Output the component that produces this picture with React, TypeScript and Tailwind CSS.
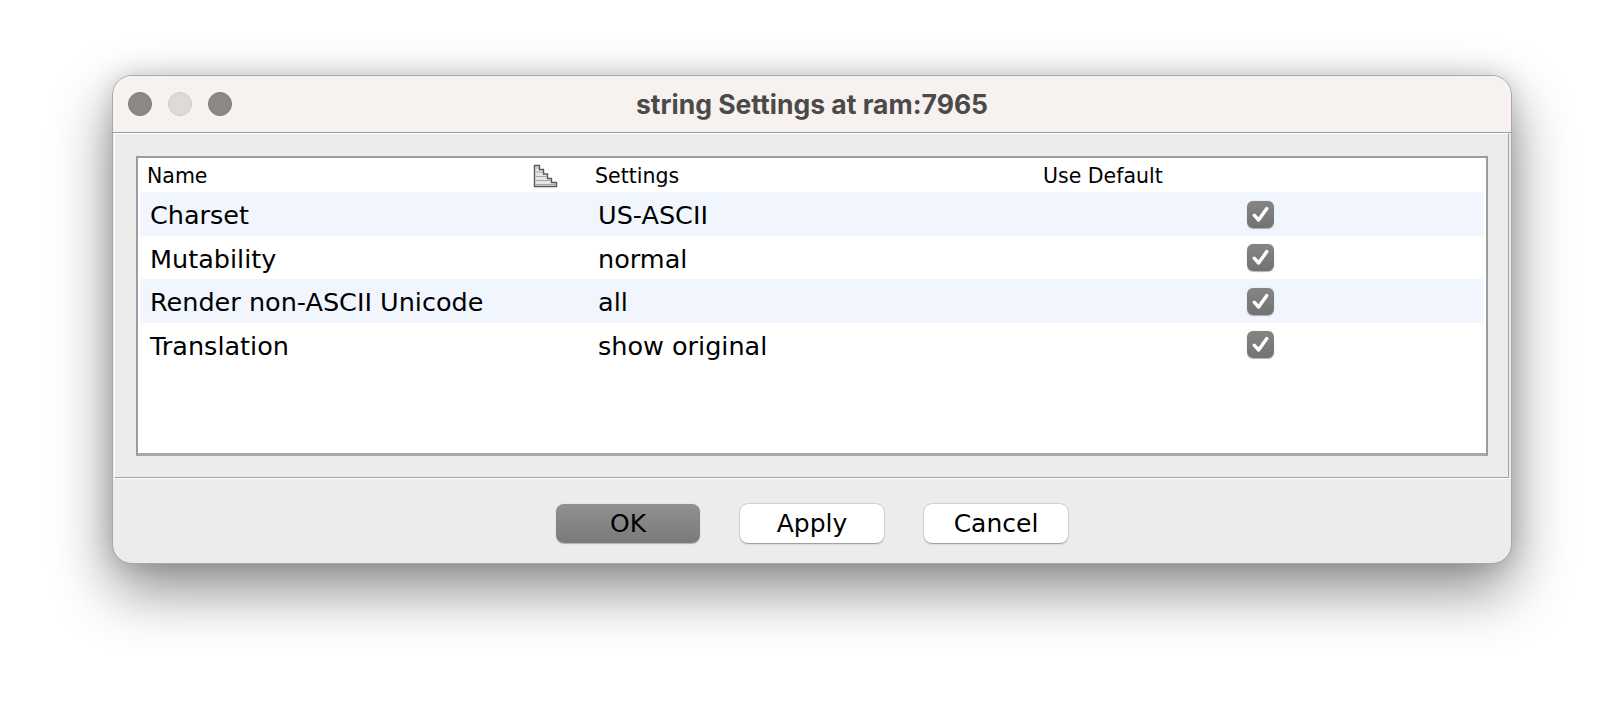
import React from "react";

const rows = [
  { name: "Charset", value: "US-ASCII" },
  { name: "Mutability", value: "normal" },
  { name: "Render non-ASCII Unicode", value: "all" },
  { name: "Translation", value: "show original" },
];

function SortIcon() {
  return (
    <svg width="25" height="24" viewBox="0 0 25 24" className="block">
      <path d="M1.5 1.5 H6.5 V5.5 H10.5 V10 H14.5 V14.5 H18.5 V18.5 H23.5 V22.5 H1.5 Z" fill="#e6e6e6" stroke="#5a5a5a" strokeWidth="1.4" />
      <line x1="2.5" y1="4" x2="6" y2="4" stroke="#a8a8a8" strokeWidth="1.2" />
      <line x1="2.5" y1="8" x2="10" y2="8" stroke="#a8a8a8" strokeWidth="1.2" />
      <line x1="2.5" y1="12.5" x2="14" y2="12.5" stroke="#a8a8a8" strokeWidth="1.2" />
      <line x1="2.5" y1="16.5" x2="18" y2="16.5" stroke="#a8a8a8" strokeWidth="1.2" />
      <line x1="2.5" y1="20.5" x2="23" y2="20.5" stroke="#a8a8a8" strokeWidth="1.2" />
    </svg>
  );
}

function Check() {
  return (
    <div className="w-[27px] h-[27px] rounded-[6px] bg-gradient-to-b from-[#858585] to-[#727272] flex items-center justify-center shadow-[0_0.5px_1px_rgba(0,0,0,0.3)]">
      <svg width="27" height="27" viewBox="0 0 27 27">
        <path d="M7.2 14.2 L11.6 19 L19.8 7.6" fill="none" stroke="#ffffff" strokeWidth="3.4" strokeLinecap="round" strokeLinejoin="round" />
      </svg>
    </div>
  );
}

export default function App() {
  return (
    <div className="w-[1624px] h-[712px] bg-white pl-[112px] pt-[75px] font-['DejaVu_Sans',sans-serif] text-black overflow-hidden">
      <div className="w-[1400px] h-[489px] rounded-[20px] border border-[#a8a8a8] bg-[#ececec] overflow-hidden flex flex-col shadow-[0_26px_60px_rgba(0,0,0,0.45),0_0_24px_rgba(0,0,0,0.15)]">
        {/* title bar */}
        <div className="h-[57px] shrink-0 bg-[#f7f2ef] border-b border-[#9a9a9a] grid grid-cols-[1fr_auto_1fr] items-center">
          <div className="flex items-center gap-4 pl-[15px]">
            <div className="w-6 h-6 rounded-full bg-[#8c8886] border border-[#807c7a]" />
            <div className="w-6 h-6 rounded-full bg-[#dedad8] border border-[#cfcbc9]" />
            <div className="w-6 h-6 rounded-full bg-[#8c8886] border border-[#807c7a]" />
          </div>
          <div className="font-['Inter',sans-serif] font-bold text-[26.5px] leading-none text-[#4a4a4a] pt-[1px]">
            string Settings at ram:7965
          </div>
          <div />
        </div>

        {/* content panel */}
        <div className="h-[345px] shrink-0 ml-[1px] mr-[2px] border border-white border-b-[#a3a3a3] border-r-[#a3a3a3] pt-[22px] pl-[21px] pr-[20px] pb-[21px]">
          <div className="h-full bg-white border-2 border-[#9d9d9d] border-b-[3px] border-b-[#a9a9a9] p-[2px] flex flex-col">
            <div className="h-[32px] grid grid-cols-3 text-[20.5px] leading-none">
              <div className="flex items-center pl-[7px] pr-[30px] justify-between">
                <span>Name</span>
                <SortIcon />
              </div>
              <div className="flex items-center pl-[7px]">Settings</div>
              <div className="flex items-center pl-[7px]">Use Default</div>
            </div>
            {rows.map((r, i) => (
              <div
                key={r.name}
                className={
                  "grid grid-cols-3 text-[25.5px] leading-none " +
                  (i % 2 === 0 ? "h-[44px] bg-[#f1f5fd]" : "h-[43px] bg-white")
                }
              >
                <div className="flex items-center pl-[10px] pt-[4px]">{r.name}</div>
                <div className="flex items-center pl-[10px] pt-[4px]">{r.value}</div>
                <div className="flex items-center justify-center">
                  <Check />
                </div>
              </div>
            ))}
          </div>
        </div>

        {/* buttons */}
        <div className="flex-1 border-t border-white flex justify-center gap-10 pt-[25px] text-[25px] leading-none">
          <button className="w-[144px] h-[39px] rounded-[8px] bg-gradient-to-b from-[#909090] to-[#7a7a7a] text-black shadow-[0_0.5px_1px_rgba(0,0,0,0.25)]">
            OK
          </button>
          <button className="w-[144px] h-[39px] rounded-[8px] bg-white text-black shadow-[0_0.5px_1.5px_rgba(0,0,0,0.35),0_0_0_0.5px_rgba(0,0,0,0.08)]">
            Apply
          </button>
          <button className="w-[144px] h-[39px] rounded-[8px] bg-white text-black shadow-[0_0.5px_1.5px_rgba(0,0,0,0.35),0_0_0_0.5px_rgba(0,0,0,0.08)]">
            Cancel
          </button>
        </div>
      </div>
    </div>
  );
}
